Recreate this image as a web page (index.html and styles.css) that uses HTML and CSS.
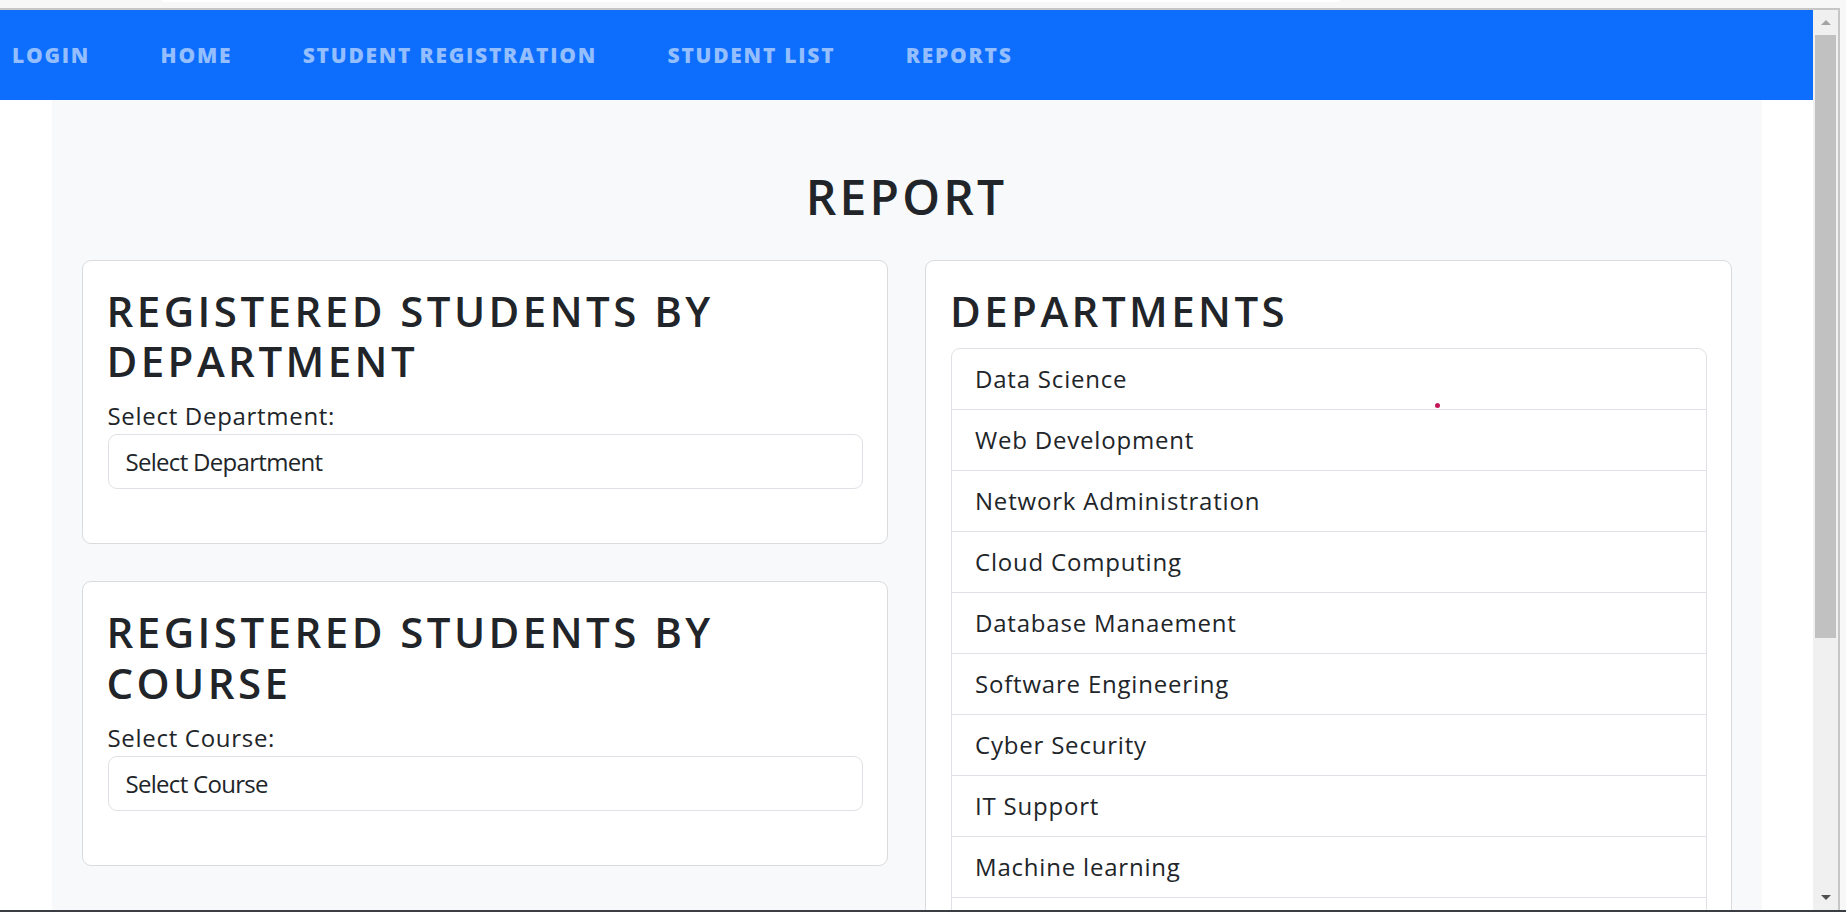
FILE: index.html
```html
<!DOCTYPE html>
<html lang="en">
<head>
<meta charset="utf-8">
<title>Report</title>
<link rel="stylesheet" href="styles.css">
</head>
<body>
<div class="chrome-top"><div class="chrome-tab"></div></div>
<div class="window">
  <div class="viewport">
    <nav class="navbar">
      <a class="nav-link" href="#">Login</a>
      <a class="nav-link" href="#">Home</a>
      <a class="nav-link" href="#">Student Registration</a>
      <a class="nav-link" href="#">Student List</a>
      <a class="nav-link" href="#">Reports</a>
    </nav>
    <div class="page">
      <main class="container">
        <h1 class="page-title">Report</h1>
        <div class="grid">
          <div class="col">
            <section class="card">
              <h3 class="card-title">Registered Students by Department</h3>
              <label class="form-label" for="dept">Select Department:</label>
              <select class="form-select" id="dept"><option>Select Department</option></select>
            </section>
            <section class="card">
              <h3 class="card-title">Registered Students by Course</h3>
              <label class="form-label" for="course">Select Course:</label>
              <select class="form-select" id="course"><option>Select Course</option></select>
            </section>
          </div>
          <div class="col">
            <section class="card card-tall">
              <h3 class="card-title">Departments</h3>
              <ul class="list-group">
                <li class="list-item">Data Science</li>
                <li class="list-item">Web Development</li>
                <li class="list-item">Network Administration</li>
                <li class="list-item">Cloud Computing</li>
                <li class="list-item">Database Manaement</li>
                <li class="list-item">Software Engineering</li>
                <li class="list-item">Cyber Security</li>
                <li class="list-item">IT Support</li>
                <li class="list-item">Machine learning</li>
                <li class="list-item list-item-empty"></li>
              </ul>
            </section>
          </div>
        </div>
      </main>
    </div>
  </div>
  <div class="scrollbar">
    <div class="sb-btn"><span class="arrow-up"></span></div>
    <div class="sb-track"><div class="sb-thumb"></div></div>
    <div class="sb-btn sb-btn-down"><span class="arrow-down"></span></div>
  </div>
</div>
<div class="taskbar-line"></div>
<div class="cursor-dot"></div>
</body>
</html>
```
FILE: styles.css
```css
* { box-sizing: border-box; }
html, body { margin: 0; padding: 0; }
body {
  width: 1846px;
  height: 912px;
  overflow: hidden;
  background: #f7f7f7;
  font-family: "Open Sans", "Noto Sans", sans-serif;
  color: #212529;
  position: relative;
}
.chrome-top {
  height: 8px;
  display: flex;
}
.chrome-tab {
  margin-left: 162px;
  width: 1178px;
  height: 2px;
  background: #ffffff;
  border-radius: 0 0 6px 6px;
}
.window {
  width: 1840px;
  height: 902px;
  border-top: 2px solid #c6c6c6;
  border-right: 2px solid #c6c6c6;
  display: flex;
  background: #ffffff;
}
.viewport {
  width: 1813px;
  height: 900px;
  overflow: hidden;
  display: flex;
  flex-direction: column;
}
.navbar {
  height: 90px;
  flex: none;
  background: #0d6efd;
  display: flex;
  align-items: center;
  padding-left: 12px;
  gap: 70.5px;
}
.nav-link {
  font-size: 21px;
  font-weight: 800;
  text-transform: uppercase;
  letter-spacing: 1.75px;
  color: #94befe;
  text-decoration: none;
  line-height: 30px;
}
.page {
  flex: 1;
  background: #ffffff;
}
.container {
  width: 1710px;
  margin: 0 auto;
  background: #f8f9fa;
  min-height: 100%;
  padding-top: 68px;
}
.page-title {
  margin: 0 0 34px;
  text-align: center;
  font-size: 48px;
  line-height: 57.6px;
  font-weight: 600;
  letter-spacing: 3.2px;
  text-transform: uppercase;
}
.grid {
  display: grid;
  grid-template-columns: 1fr 1fr;
  column-gap: 37px;
  padding: 0 30px;
  align-items: start;
}
.col {
  display: flex;
  flex-direction: column;
  gap: 37px;
}
.card {
  background: #ffffff;
  border: 1px solid #d9dbde;
  border-radius: 9px;
  padding: 25px 24px 24px 25px;
}
.card-title {
  margin: 0 0 12px -1px;
  font-size: 42px;
  line-height: 50.4px;
  font-weight: 600;
  letter-spacing: 3.45px;
  text-transform: uppercase;
}
.form-label {
  display: block;
  font-size: 24px;
  line-height: 36px;
  letter-spacing: 0.7px;
}
.form-select {
  display: block;
  width: 100%;
  appearance: none;
  -webkit-appearance: none;
  background: #ffffff;
  border: 1px solid #dee2e6;
  border-radius: 9px;
  padding: 8.5px 16px 8.5px 17px;
  font-family: "Open Sans", "Noto Sans", sans-serif;
  font-size: 24px;
  line-height: 36px;
  height: 55px;
  letter-spacing: -0.7px;
  color: #212529;
  margin-bottom: 30px;
}
.list-group {
  list-style: none;
  margin: 0;
  padding: 0;
  border: 1px solid #dee2e6;
  border-radius: 9px;
}
.list-item {
  padding: 12px 24px 12px 23px;
  font-size: 24px;
  line-height: 36px;
  letter-spacing: 0.8px;
  border-bottom: 1px solid #dee2e6;
}
.list-item-empty { height: 61px; }
.list-item:last-child { border-bottom: 0; }
.scrollbar {
  width: 25px;
  height: 900px;
  background: #f0f0f0;
  display: flex;
  flex-direction: column;
  align-items: center;
}
.sb-btn {
  height: 25px;
  width: 25px;
  display: flex;
  align-items: center;
  justify-content: center;
  flex: none;
}
.sb-track {
  flex: 1;
  width: 21px;
}
.sb-thumb {
  height: 603px;
  background: #c1c1c1;
}
.arrow-up {
  width: 0; height: 0;
  border-left: 5px solid transparent;
  border-right: 5px solid transparent;
  border-bottom: 5px solid #a3a3a3;
}
.arrow-down {
  width: 0; height: 0;
  border-left: 5px solid transparent;
  border-right: 5px solid transparent;
  border-top: 5px solid #505050;
}
.taskbar-line {
  height: 2px;
  background: #3a3e42;
}
.cursor-dot {
  position: absolute;
  left: 1434.5px;
  top: 402.5px;
  width: 5px;
  height: 5px;
  border-radius: 50%;
  background: #c2185b;
}
```
